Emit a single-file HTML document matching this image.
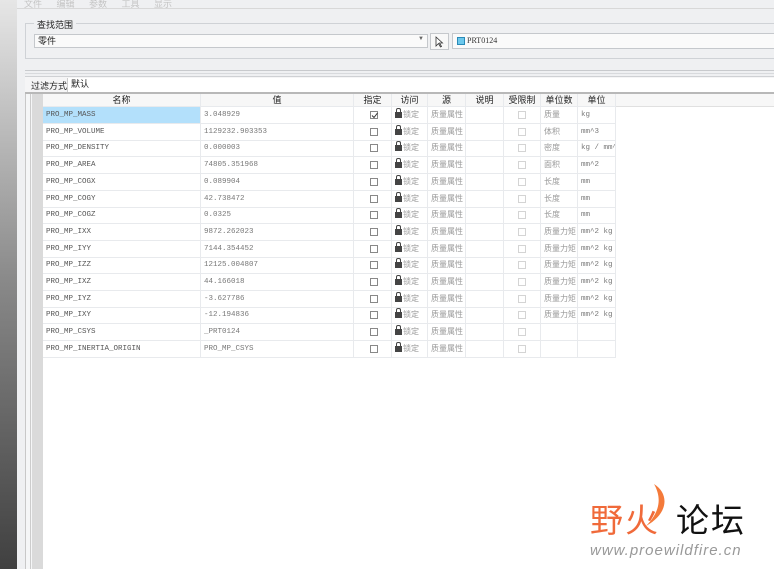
<!DOCTYPE html>
<html><head><meta charset="utf-8"><style>
*{margin:0;padding:0;box-sizing:border-box}
body{width:774px;height:569px;overflow:hidden;background:#f0f1f3;font-family:"Liberation Sans","Noto Sans CJK SC",sans-serif;font-size:9px;color:#333;position:relative}
.abs{position:absolute}
.lefts{left:0;top:0;width:17px;height:569px;background:linear-gradient(#e6e6e6,#888 50%,#404040)}
.cell{position:absolute;height:17px;line-height:16px;white-space:nowrap;overflow:hidden;border-right:1px solid #e8eaed;border-bottom:1px solid #e8eaed;padding-left:3px;color:#999;font-size:8px}
.mono{font-family:"Liberation Mono","Noto Serif CJK SC",monospace;font-size:7.5px;color:#777}
.cb{position:absolute;width:8px;height:8px;border:1px solid #888;background:#fff}
.cb2{border-color:#d4d4d4}
.lock{display:inline-block;width:7px;height:6px;background:#444;margin-right:1px;position:relative;top:1px}
.lock:before{content:"";position:absolute;left:1px;top:-4px;width:3px;height:3px;border:1px solid #444;border-bottom:0;border-radius:2px 2px 0 0}
</style></head><body>
<div class="abs lefts"></div>
<div class="abs" style="left:17px;top:0;width:757px;height:569px;background:#eff0f2"></div>
<div class="abs" style="left:24px;top:-3px;color:#c4c4c4;font-size:9px;word-spacing:12px">文件 编辑 参数 工具 显示</div>
<div class="abs" style="left:17px;top:8px;width:757px;height:1px;background:#d8d8d8"></div>
<div class="abs" style="left:25px;top:23px;width:760px;height:36px;border:1px solid #cfd2d6"></div>
<div class="abs" style="left:34px;top:18px;background:#eff0f2;padding:0 3px;font-size:9px;color:#222">查找范围</div>
<div class="abs" style="left:34px;top:34px;width:394px;height:14px;border:1px solid #c5c8cc;background:#fafafa;font-size:9px;line-height:12px;padding-left:3px;color:#222">零件</div>
<div class="abs" style="left:418px;top:36px;font-size:6px;color:#666">▼</div>
<div class="abs" style="left:430px;top:33px;width:19px;height:17px;border:1px solid #c5c8cc;background:#f8f8f8"><svg width="17" height="15"><path d="M5 3 L5 12 L7.5 9.5 L9.5 13 L10.5 12.5 L8.5 9 L11.5 9 Z" fill="#fff" stroke="#333" stroke-width="0.8"/></svg></div>
<div class="abs" style="left:452px;top:33px;width:330px;height:16px;border:1px solid #c5c8cc;background:#fafafa;font-size:8px;line-height:14px;padding-left:14px;color:#333;font-family:'Liberation Serif',serif">PRT0124</div>
<div class="abs" style="left:457px;top:37px;width:8px;height:8px;background:#6cc8ec;border:1px solid #2a8ab8"></div>
<div class="abs" style="left:25px;top:70px;width:749px;height:1px;background:#c8cacd"></div>
<div class="abs" style="left:25px;top:73px;width:749px;height:1px;background:#d8dadd"></div>
<div class="abs" style="left:25px;top:76px;width:749px;height:16px;background:#f5f5f6;border-top:1px solid #cfd1d4"></div>
<div class="abs" style="left:31px;top:79px;font-size:9px;color:#222">过滤方式</div>
<div class="abs" style="left:67px;top:78px;width:707px;height:14px;border-left:1px solid #ccc;background:#fff;font-size:9px;padding-left:3px;line-height:13px;color:#222">默认</div>
<div class="abs" style="left:25px;top:92px;width:749px;height:477px;border-left:1px solid #c8c8c8;background:#f5f6f7"></div>
<div class="abs" style="left:30px;top:93px;width:1px;height:476px;background:#ccc"></div>
<div class="abs" style="left:32px;top:93px;width:11px;height:476px;background:#dadada"></div>
<div class="abs" style="left:43px;top:93px;width:731px;height:476px;background:#fff"></div>
<div class="abs" style="left:25px;top:92px;width:749px;height:2px;background:#b8b8b8"></div>
<div id="t"></div>
<div class="abs" style="left:590px;top:502px;font-size:33px;color:#f06a3a;font-family:'Noto Sans CJK SC',sans-serif;line-height:1;letter-spacing:2px">野火</div>
<svg class="abs" style="left:640px;top:482px" width="34" height="46"><path d="M14 2 C30 12 28 32 6 44 C20 30 22 16 14 2 Z" fill="#f47a3a"/></svg>
<div class="abs" style="left:676px;top:502px;font-size:33px;color:#111;font-family:'Noto Sans CJK SC',sans-serif;line-height:1;letter-spacing:2px">论坛</div>
<div class="abs" style="left:590px;top:542px;font-size:15px;color:#999;font-style:italic;letter-spacing:1px">www.proewildfire.cn</div>
<script>
var cols=[[43,158],[201,153],[354,38],[392,36],[428,38],[466,38],[504,37],[541,37],[578,38]];
var hd=["名称","值","指定","访问","源","说明","受限制","单位数","单位"];
var rows=[["PRO_MP_MASS","3.048929","质量","kg"],["PRO_MP_VOLUME","1129232.903353","体积","mm^3"],["PRO_MP_DENSITY","0.000003","密度","kg / mm^"],["PRO_MP_AREA","74805.351968","面积","mm^2"],["PRO_MP_COGX","0.089904","长度","mm"],["PRO_MP_COGY","42.738472","长度","mm"],["PRO_MP_COGZ","0.0325","长度","mm"],["PRO_MP_IXX","9872.262023","质量力矩","mm^2 kg"],["PRO_MP_IYY","7144.354452","质量力矩","mm^2 kg"],["PRO_MP_IZZ","12125.004807","质量力矩","mm^2 kg"],["PRO_MP_IXZ","44.166018","质量力矩","mm^2 kg"],["PRO_MP_IYZ","-3.627786","质量力矩","mm^2 kg"],["PRO_MP_IXY","-12.194836","质量力矩","mm^2 kg"],["PRO_MP_CSYS","_PRT0124","",""],["PRO_MP_INERTIA_ORIGIN","PRO_MP_CSYS","",""]];
var h="";
h+='<div class="abs" style="left:43px;top:94px;width:731px;height:13px;background:#f7f7f7;border-bottom:1px solid #e0e0e0"></div>';
cols.forEach(function(c,i){h+='<div class="cell" style="left:'+c[0]+'px;top:94px;width:'+c[1]+'px;height:13px;line-height:12px;color:#222;font-size:9px;text-align:center;padding:0">'+hd[i]+'</div>';});
rows.forEach(function(r,k){var y=107+k*16.7;
 var v=[r[0],r[1],"","","质量属性","","",r[2],r[3]];
 cols.forEach(function(c,i){var cls="cell"+((i<2||i==8)?" mono":"");var st="left:"+c[0]+"px;top:"+y+"px;width:"+c[1]+"px;";
  if(i==0&&k==0)st+="background:#b3e0fb;color:#333;";
  if(i==0)st+="color:#555;";
  var t=v[i];if(i==3)t='<span class="lock"></span>锁定';
  h+='<div class="'+cls+'" style="'+st+'">'+t+'</div>';});
 h+='<div class="cb" style="left:370px;top:'+(y+4)+'px">'+(k==0?'<svg width="7" height="7" style="position:absolute;left:0;top:0"><path d="M1 3.5 L3 5.5 L6.5 1" fill="none" stroke="#333" stroke-width="1"/></svg>':'')+'</div>';
 h+='<div class="cb cb2" style="left:518px;top:'+(y+4)+'px"></div>';
});
document.getElementById("t").innerHTML=h;
</script>
</body></html>
